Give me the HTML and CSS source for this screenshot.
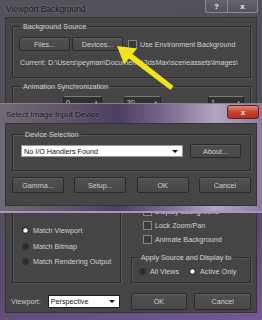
FILE: index.html
```html
<!DOCTYPE html>
<html lang="en">
<head>
    <meta charset="UTF-8">
    <title>Viewport Background</title>
    <link rel="stylesheet" href="styles.css">
</head>
<body>
    <div class="window main-window">
        <div class="titlebar">
            <span class="title">Viewport Background</span>
            <div class="caption">
                <span class="cap-btn help">?</span>
                <span class="cap-btn close">x</span>
            </div>
        </div>
        <div class="client">
            <fieldset class="group source">
                <legend>Background Source</legend>
                <div class="row">
                    <button class="btn">Files...</button>
                    <button class="btn">Devices...</button>
                    <label class="check env"><span class="box"></span>Use Environment Background</label>
                </div>
                <div class="current">Current: D:\Users\peyman\Documents\3dsMax\sceneassets\images\</div>
            </fieldset>

            <fieldset class="group anim">
                <legend>Animation Synchronization</legend>
                <!-- labels of this row sit under the second dialog -->
                <div class="spin-row">
                    <span class="spin-gap"></span>
                    <span class="spin s1">0<i>&#9650;</i></span>
                    <span class="spin-gap to"></span>
                    <span class="spin s2">30<i>&#9650;</i></span>
                    <span class="spin-gap"></span>
                    <span class="spin s3">1<i>&#9650;</i></span>
                </div>
            </fieldset>

            <div class="lower">
                <fieldset class="group aspect">
                    <div class="radios">
                        <label class="radio on"><span class="dot"></span>Match Viewport</label>
                        <label class="radio"><span class="dot"></span>Match Bitmap</label>
                        <label class="radio"><span class="dot"></span>Match Rendering Output</label>
                    </div>
                </fieldset>
                <div class="right-col">
                    <label class="check"><span class="box"></span>Display Background</label>
                    <label class="check"><span class="box"></span>Lock Zoom/Pan</label>
                    <label class="check"><span class="box"></span>Animate Background</label>
                    <fieldset class="group apply">
                        <legend>Apply Source and Display to</legend>
                        <div class="apply-row">
                            <label class="radio"><span class="dot"></span>All Views</label>
                            <label class="radio on"><span class="dot"></span>Active Only</label>
                        </div>
                    </fieldset>
                </div>
            </div>

            <div class="footer">
                <span class="vp-label">Viewport:</span>
                <span class="select vp-select">Perspective<i class="caret"></i></span>
                <button class="btn ok">OK</button>
                <button class="btn cancel">Cancel</button>
            </div>
        </div>
    </div>

    <!-- second dialog, opened over the first one -->
    <div class="window dialog">
        <div class="titlebar dialog-bar">
            <span class="title">Select Image Input Device</span>
            <span class="cap-btn red-close">x</span>
        </div>
        <div class="client dialog-client">
            <fieldset class="group device">
                <legend>Device Selection</legend>
                <div class="device-row">
                    <span class="select dev-select">No I/O Handlers Found<i class="caret"></i></span>
                    <button class="btn about">About...</button>
                </div>
            </fieldset>
            <div class="dialog-buttons">
                <button class="btn">Gamma...</button>
                <button class="btn">Setup...</button>
                <button class="btn">OK</button>
                <button class="btn">Cancel</button>
            </div>
        </div>
    </div>

    <svg class="arrow" width="262" height="320" viewBox="0 0 262 320">
        <polygon points="117,46 137,48.5 132.5,54 173.5,86 170.5,90 129,58.5 124,64" fill="#f3e31c"/>
    </svg>
</body>
</html>
```

FILE: styles.css
```css
* {
    box-sizing: border-box;
}
body {
    margin: 0;
    width: 262px;
    height: 320px;
    overflow: hidden;
    position: relative;
    font-family: "Liberation Sans", Arial, sans-serif;
    font-size: 7.2px;
    color: #d2d2d2;
    background: #3b3640;
}
.window {
    width: 262px;
    display: flex;
    flex-direction: column;
    padding: 0 5px;
}
.main-window {
    height: 320px;
    padding-bottom: 7px;
    background: linear-gradient(165deg, #55525b 0%, #514d57 45%, #5a4a6e 75%, #74589a 100%);
}
.titlebar {
    height: 17px;
    display: flex;
    justify-content: space-between;
    align-items: flex-start;
}
.title {
    margin: 4px 0 0 1px;
    font-size: 8.4px;
    color: #161616;
    text-shadow: 0 0 3px rgba(255, 255, 255, 0.35);
}
.caption {
    display: flex;
    margin-right: -1px;
}
.cap-btn {
    height: 13px;
    display: flex;
    align-items: center;
    justify-content: center;
    border: 1px solid #8c8892;
    border-top: none;
    background: linear-gradient(#67636d, #56525c);
    color: #f0f0f0;
    font-weight: bold;
    font-size: 8px;
}
.help {
    width: 22px;
    border-right: none;
    border-radius: 0 0 0 3px;
}
.close {
    width: 31px;
    border-radius: 0 0 3px 0;
}
.client {
    flex: 1;
    background: #454545;
    border: 1px solid #343434;
    padding: 4px 5px 0 6px;
}
.group {
    margin: 0;
    padding: 0 6px;
    min-width: 0;
    border: 1px solid #2b2b2b;
    box-shadow: inset 1px 1px 0 #555, 1px 1px 0 #555;
}
.group legend {
    padding: 0 2px;
    margin-left: 2px;
    line-height: 9px;
    height: 9px;
}
.btn {
    height: 14px;
    padding: 0;
    font: inherit;
    color: #d0d0d0;
    background: linear-gradient(#505050, #474747);
    border: 1px solid #2a2a2a;
    border-radius: 2px;
    box-shadow: inset 0 1px 0 #5c5c5c;
}

/* background source */
.source {
    height: 56px;
}
.row {
    display: flex;
    align-items: center;
    margin-top: 6px;
    height: 14px;
}
.row .btn {
    width: 51px;
    margin-right: 2px;
}
.check {
    display: flex;
    align-items: center;
    height: 14px;
    white-space: nowrap;
}
.box {
    width: 9px;
    height: 9px;
    margin-right: 3px;
    background: #3a3a3a;
    border: 1px solid #858585;
}
.env {
    margin-left: 3px;
}
.current {
    margin: 7px 0 0 1px;
    line-height: 10px;
    width: 218px;
    white-space: nowrap;
    overflow: hidden;
}

/* animation sync */
.anim {
    height: 90px;
    margin-top: 4px;
}
.spin-row {
    display: flex;
    align-items: flex-start;
    margin-top: 5px;
    height: 12px;
}
.spin {
    display: flex;
    justify-content: space-between;
    align-items: center;
    height: 12px;
    padding: 0 2px;
    background: #303030;
    border: 1px solid #222;
    border-top-color: #7a7a7a;
    color: #cfcfcf;
}
.spin i {
    font-style: normal;
    font-size: 5px;
}
.spin-gap {
    width: 46px;
}
.spin-gap.to {
    width: 23px;
}
.s1 {
    width: 40px;
}
.s2 {
    width: 39px;
}
.s3 {
    width: 37px;
    margin-left: 3px;
}

/* lower part */
.lower {
    display: flex;
    margin-top: 6px;
    height: 105px;
}
.aspect {
    width: 109px;
    height: 105px;
}
.radios {
    margin-top: 44px;
}
.radio {
    display: flex;
    align-items: center;
    height: 15.5px;
    white-space: nowrap;
    padding-left: 3px;
}
.dot {
    width: 7px;
    height: 7px;
    border-radius: 50%;
    margin-right: 4px;
    background: radial-gradient(#2a2a2a 45%, #555 100%);
    border: 1px solid #262626;
}
.radio.on .dot {
    background: radial-gradient(#ffffff 40%, #9a9a9a 70%, #3a3a3a 100%);
}
.right-col {
    width: 120px;
    margin-left: 10px;
    display: flex;
    flex-direction: column;
    justify-content: flex-end;
}
.right-col .check {
    padding-left: 12px;
}
.apply {
    height: 30px;
    margin-top: 7px;
    padding: 0 5px;
}
.apply-row {
    display: flex;
    margin-top: 3px;
}
.apply-row .radio {
    height: 12px;
    padding-left: 2px;
    width: 50px;
}

/* footer */
.footer {
    display: flex;
    align-items: center;
    margin-top: 9px;
    height: 18px;
}
.vp-label {
    width: 36px;
    margin-left: -1px;
    color: #c8c8c8;
}
.select {
    position: relative;
    display: flex;
    align-items: center;
    background: #fff;
    color: #111;
    border: 1px solid #1a1a1a;
    padding-left: 2px;
    white-space: nowrap;
}
.caret {
    position: absolute;
    right: 4px;
    top: 50%;
    margin-top: -1px;
    border-left: 3px solid transparent;
    border-right: 3px solid transparent;
    border-top: 3px solid #111;
}
.vp-select {
    width: 72px;
    height: 13px;
    margin-left: 1px;
}
.footer .btn {
    width: 57px;
    height: 17px;
}
.ok {
    margin-left: 11px;
}
.cancel {
    margin-left: 7px;
}

/* select image input device */
.dialog {
    position: absolute;
    top: 103px;
    left: 0;
    height: 110px;
    padding-bottom: 5px;
    background: linear-gradient(90deg, #6f6a75 0%, #5e5568 25%, #4c3e61 45%, #7f6d94 65%, #b3a6bf 82%, #8e7aa3 100%);
    border-top: 1px solid #85808a;
    border-bottom: 2px solid #a893c2;
    z-index: 1;
}
.dialog-bar {
    height: 19px;
}
.dialog-bar .title {
    margin-top: 6px;
    font-size: 8px;
}
.red-close {
    width: 32px;
    height: 14px;
    margin: 1px -2px 0 0;
    border: 1px solid #5a2020;
    border-radius: 3px;
    background: linear-gradient(#e28b7c, #c8412d 50%, #b3301e);
}
.dialog-client {
    padding: 6px 5px 0 6px;
}
.device {
    height: 41px;
    padding: 0 6px 0 8px;
}
.device-row {
    display: flex;
    align-items: center;
    margin-top: 5px;
    height: 14px;
}
.dev-select {
    width: 162px;
    height: 12px;
    border-color: #9a9a9a;
}
.about {
    width: 51px;
    margin-left: 7px;
}
.dialog-buttons {
    display: flex;
    justify-content: space-between;
    margin-top: 6px;
}
.dialog-buttons .btn {
    width: 52px;
    height: 16px;
}

.arrow {
    position: absolute;
    left: 0;
    top: 0;
    z-index: 2;
}
```
